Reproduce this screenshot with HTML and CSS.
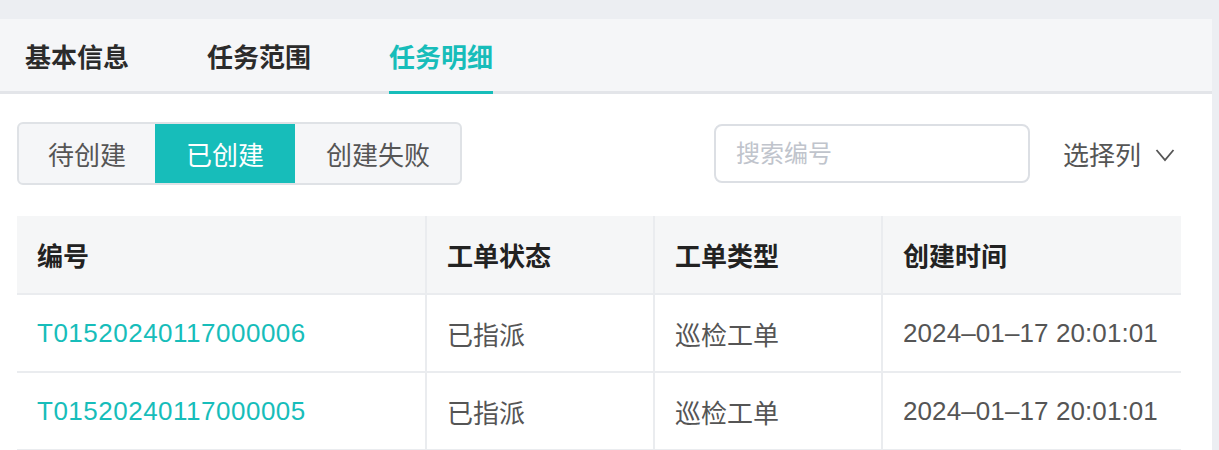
FILE: index.html
```html
<!DOCTYPE html>
<html lang="zh-CN">
<head>
  <meta charset="UTF-8" />
  <meta name="viewport" content="width=device-width, initial-scale=1" />
  <title>任务明细</title>
  <link rel="stylesheet" href="styles.css">
</head>
<body>
  <div class="panel">
    <nav class="tabs">
      <a class="tab">基本信息</a>
      <a class="tab">任务范围</a>
      <a class="tab active">任务明细</a>
    </nav>

    <div class="content">
      <div class="toolbar">
        <div class="segmented">
          <button class="seg">待创建</button>
          <button class="seg active">已创建</button>
          <button class="seg">创建失败</button>
        </div>
        <input class="search" type="text" placeholder="搜索编号" />
        <div class="col-select">
          选择列
          <svg class="chevron" width="20" height="14" viewBox="0 0 20 14">
            <path d="M1.5 2 L10 12 L18.5 2" fill="none" stroke="#555" stroke-width="1.8" />
          </svg>
        </div>
      </div>

      <table class="grid">
        <thead>
          <tr>
            <th class="c-id">编号</th>
            <th class="c-state">工单状态</th>
            <th class="c-type">工单类型</th>
            <th class="c-time">创建时间</th>
          </tr>
        </thead>
        <tbody>
          <tr>
            <td><a class="link">T01520240117000006</a></td>
            <td>已指派</td>
            <td>巡检工单</td>
            <td class="time">2024–01–17 20:01:01</td>
          </tr>
          <tr>
            <td><a class="link">T01520240117000005</a></td>
            <td>已指派</td>
            <td>巡检工单</td>
            <td class="time">2024–01–17 20:01:01</td>
          </tr>
        </tbody>
      </table>
    </div>
  </div>
</body>
</html>
```

FILE: styles.css
```css
* {
  margin: 0;
  padding: 0;
  box-sizing: border-box;
}

html, body {
  background: #eceef2;
  font-family: 'Liberation Sans', 'Noto Sans CJK SC', sans-serif;
  color: #333;
  overflow: hidden;
}

.panel {
  margin-top: 19px;
  margin-right: 7px;
  background: #fff;
  min-height: 431px;
}

.tabs {
  display: flex;
  gap: 78px;
  height: 75px;
  padding-left: 25px;
  background: #f5f6f8;
  border-bottom: 3px solid #e3e5e9;
}

.tab {
  display: flex;
  align-items: center;
  height: 75px;
  font-size: 26px;
  font-weight: bold;
  color: #2b2b2b;
  border-bottom: 3px solid transparent;
  padding-top: 1px;
}

.tab.active {
  color: #17bdba;
  border-bottom-color: #17bdba;
}

.content {
  padding: 28px 31px 0 17px;
}

.toolbar {
  display: flex;
  align-items: center;
  padding-right: 6px;
}

.segmented {
  display: flex;
  height: 63px;
  border: 2px solid #dfe2e6;
  border-radius: 6px;
  background: #f5f6f8;
  overflow: hidden;
}

.seg {
  border: none;
  background: transparent;
  padding: 0 29px;
  font-family: inherit;
  font-size: 26px;
  color: #555;
}

.seg:last-child {
  padding: 0 30px 0 31px;
}

.seg.active {
  background: #17bdba;
  color: #fff;
  margin-top: -2px;
  margin-bottom: -2px;
  padding: 0 31px;
}

.search {
  margin-left: auto;
  width: 316px;
  height: 59px;
  border: 2px solid #dcdfe4;
  border-radius: 8px;
  padding-left: 20px;
  font-family: inherit;
  font-size: 24px;
  color: #333;
  outline: none;
}

.search::placeholder {
  color: #c0c4cc;
}

.col-select {
  display: flex;
  align-items: center;
  gap: 14px;
  margin-left: 33px;
  font-size: 26px;
  color: #555;
}

.chevron {
  margin-top: 2px;
}

.grid {
  width: 100%;
  margin-top: 31px;
  border-collapse: collapse;
  table-layout: fixed;
  font-size: 26px;
}

.grid th,
.grid td {
  height: 78px;
  padding: 0 20px;
  text-align: left;
  border-bottom: 2px solid #eaecef;
  border-left: 2px solid #eaecef;
  white-space: nowrap;
}

.grid th:first-child,
.grid td:first-child {
  border-left: none;
}

.grid th {
  background: #f5f6f7;
  font-weight: bold;
  color: #222;
}

.grid td {
  color: #555;
}

.c-id { width: 409px; }
.c-state { width: 228px; }
.c-type { width: 228px; }

.link {
  color: #17bdba;
  letter-spacing: 0.5px;
}

.time {
  letter-spacing: 0.1px;
}
```
